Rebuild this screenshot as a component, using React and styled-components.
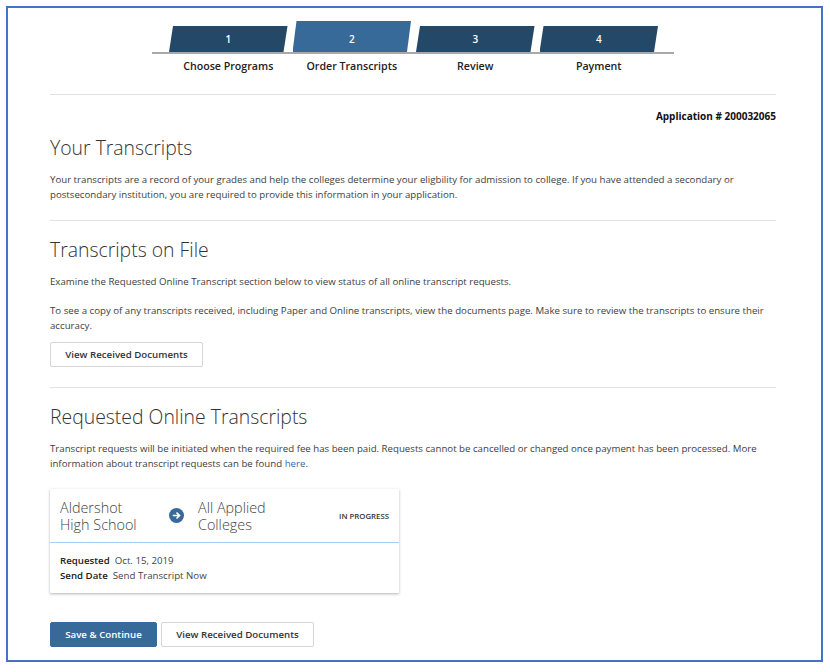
import React from "react";
import styled, { createGlobalStyle } from "styled-components";

const Global = createGlobalStyle`
  html, body { margin: 0; padding: 0; background: #fff; }
  body { font-family: "Open Sans", "Liberation Sans", sans-serif; color: #3a3a3a; font-size: 9.68px; }
`;
const Frame = styled.div`
  box-sizing: border-box;
  width: 817px;
  height: 656px;
  margin: 6px 0 0 6px;
  border: 2px solid #4472c4;
  padding: 13px 45px 0 42px;
  overflow: hidden;
`;
const Stepper = styled.div`
  width: 522px;
  margin-left: 102px;
`;
const Track = styled.div`
  display: flex;
  align-items: flex-end;
  gap: 5px;
  height: 31px;
  padding-left: 17px;
  border-bottom: 2px solid #a9a9a9;
`;
const Step = styled.div`
  width: 118.5px;
  height: ${(p) => (p.$active ? "31px" : "26px")};
  background: ${(p) => (p.$active ? "#376a98" : "#244867")};
  clip-path: polygon(4px 0, 100% 0, calc(100% - 4px) 100%, 0 100%);
  color: #fff;
  font-size: 10px;
  font-weight: 600;
  display: flex;
  align-items: center;
  justify-content: center;
  padding-top: ${(p) => (p.$active ? "5px" : "0")};
  box-sizing: border-box;
`;
const Labels = styled.div`
  display: flex;
  gap: 5px;
  padding-left: 17px;
  margin-top: 4px;
`;
const Label = styled.div`
  width: 118.5px;
  text-align: center;
  font-size: 10.65px;
  line-height: 16px;
  font-weight: 600;
  color: #222;
  white-space: nowrap;
`;
const Rule = styled.hr`
  border: 0;
  border-top: 1px solid #dfe3e6;
  margin: ${(p) => p.$m || "0"};
`;
const AppNo = styled.div`
  text-align: right;
  font-size: 10px;
  font-weight: 700;
  color: #111;
  line-height: 14px;
  margin-top: 14px;
`;
const Title = styled.h2`
  font-size: 19.4px;
  font-weight: 300;
  color: #333;
  line-height: 28px;
  margin: ${(p) => p.$m || "0"};
`;
const Para = styled.p`
  margin: ${(p) => p.$m || "0"};
  line-height: 15px;
  font-size: 9.68px;
  color: #3d3d3d;
  a { color: #2f6da8; text-decoration: none; }
`;
const Button = styled.button`
  box-sizing: border-box;
  display: block;
  height: 25px;
  padding: 0;
  width: ${(p) => p.$w};
  margin-top: ${(p) => p.$mt || "0"};
  font-family: inherit;
  font-size: 9.7px;
  font-weight: 600;
  border-radius: 2px;
  border: 1px solid ${(p) => (p.$primary ? "#376a98" : "#d5d5d5")};
  background: ${(p) => (p.$primary ? "#376a98" : "#fff")};
  color: ${(p) => (p.$primary ? "#fff" : "#333")};
`;
const Card = styled.div`
  width: 349px;
  height: 104px;
  margin-top: 18px;
  background: #fff;
  box-shadow: 0 1px 3px rgba(0, 0, 0, 0.3);
  border-radius: 1px;
`;
const CardHead = styled.div`
  box-sizing: border-box;
  height: 54px;
  display: flex;
  align-items: center;
  padding: 0 10px;
  border-bottom: 1px solid #a9cdf0;
`;
const Place = styled.div`
  font-size: 14.4px;
  font-weight: 300;
  line-height: 17px;
  color: #444;
  width: ${(p) => p.$w};
  white-space: nowrap;
`;
const Arrow = styled.svg`
  width: 15px;
  height: 15px;
  margin-right: 14px;
  flex: none;
`;
const Status = styled.div`
  margin-left: auto;
  font-size: 7.8px;
  font-weight: 600;
  color: #333;
`;
const CardBody = styled.div`
  padding: 11px 10px 0;
  line-height: 14.5px;
  font-size: 9.7px;
`;
const Row = styled.div`
  display: flex;
  gap: 5px;
  color: #444;
  b { font-weight: 600; color: #222; }
`;
const Actions = styled.div`
  display: flex;
  gap: 4px;
  margin-top: 29px;
`;

export default function App() {
  return (
    <>
      <Global />
      <Frame>
        <Stepper>
          <Track>
            <Step>1</Step>
            <Step $active>2</Step>
            <Step>3</Step>
            <Step>4</Step>
          </Track>
          <Labels>
            <Label>Choose Programs</Label>
            <Label>Order Transcripts</Label>
            <Label>Review</Label>
            <Label>Payment</Label>
          </Labels>
        </Stepper>
        <Rule $m="20px 0 0" />
        <AppNo>Application # 200032065</AppNo>
        <Title $m="11px 0 0">Your Transcripts</Title>
        <Para $m="10px 0 0">
          Your transcripts are a record of your grades and help the colleges determine your eligbility for admission to college. If you have attended a secondary or postsecondary institution, you are required to provide this information in your application.
        </Para>
        <Rule $m="18px 0 0" />
        <Title $m="15px 0 0">Transcripts on File</Title>
        <Para $m="10px 0 0">Examine the Requested Online Transcript section below to view status of all online transcript requests.</Para>
        <Para $m="14px 0 0">
          To see a copy of any transcripts received, including Paper and Online transcripts, view the documents page. Make sure to review the transcripts to ensure their accuracy.
        </Para>
        <Button $w="153px" $mt="9px">View Received Documents</Button>
        <Rule $m="20px 0 0" />
        <Title $m="15px 0 0">Requested Online Transcripts</Title>
        <Para $m="10px 0 0">
          Transcript requests will be initiated when the required fee has been paid. Requests cannot be cancelled or changed once payment has been processed. More information about transcript requests can be found <a href="#">here</a>.
        </Para>
        <Card>
          <CardHead>
            <Place $w="109px">Aldershot<br />High School</Place>
            <Arrow viewBox="0 0 16 16" aria-hidden="true">
              <circle cx="8" cy="8" r="8" fill="#376a98" />
              <path d="M4 8h7M8 4.8 11.2 8 8 11.2" fill="none" stroke="#fff" strokeWidth="1.8" />
            </Arrow>
            <Place $w="100px">All Applied<br />Colleges</Place>
            <Status>IN PROGRESS</Status>
          </CardHead>
          <CardBody>
            <Row><b>Requested</b><span>Oct. 15, 2019</span></Row>
            <Row><b>Send Date</b><span>Send Transcript Now</span></Row>
          </CardBody>
        </Card>
        <Actions>
          <Button $primary $w="107px">Save &amp; Continue</Button>
          <Button $w="153px">View Received Documents</Button>
        </Actions>
      </Frame>
    </>
  );
}
